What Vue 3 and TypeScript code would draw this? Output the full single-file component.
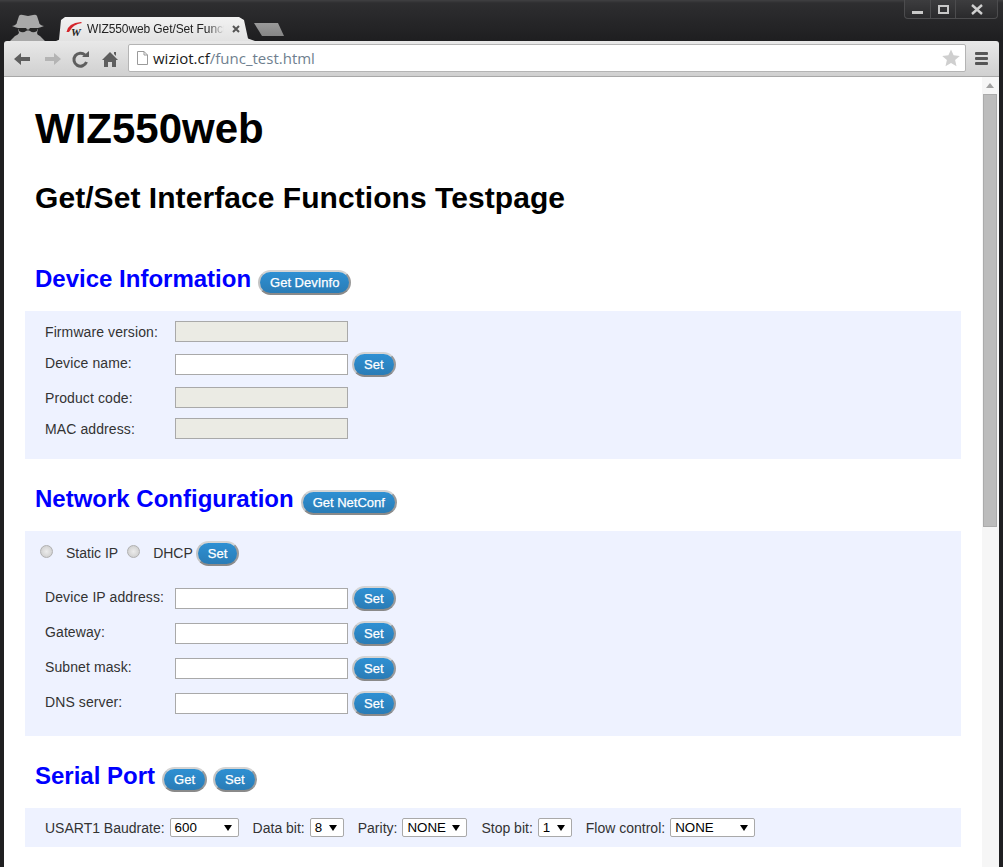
<script setup lang="ts">
const deviceRows = [
  { label: 'Firmware version:', disabled: true, set: false },
  { label: 'Device name:', disabled: false, set: true },
  { label: 'Product code:', disabled: true, set: false },
  { label: 'MAC address:', disabled: true, set: false },
];
const netRows = ['Device IP address:', 'Gateway:', 'Subnet mask:', 'DNS server:'];
</script>

<template>
  <div class="window">
    <div class="tabstrip">
      <svg class="spy" width="36" height="27" viewBox="0 0 36 27">
        <path d="M7 8 L9 2 Q10 0 13 1 L18 2 L23 1 Q26 0 27 2 L29 8 Q29 11 34 12 Q28 15 18 15 Q8 15 2 12 Q7 11 7 8 Z" fill="#a9a9a9" />
        <path d="M8 15 H28 L27 19 Q27 21 30 22 L35 27 H0 L5 22 Q8 21 9 19 Z" fill="#a9a9a9" />
        <path d="M8 14 H16 L17 15.5 H19 L20 14 H28 L27 17 Q23 19.5 20 17 L19 16.5 H17 L16 17 Q13 19.5 9 17 Z" fill="#262626" />
      </svg>
      <div class="tab">
        <svg class="favicon" width="18" height="16" viewBox="0 0 18 16">
          <path d="M0.5 11 Q2 2 15 1 L16 2 Q7 3 3 11 Z" fill="#d4252b" />
          <text x="5" y="15" class="fav-w">W</text>
        </svg>
        <span class="tab-title">WIZ550web Get/Set Funct</span>
        <svg class="tab-close" width="8" height="8" viewBox="0 0 8 8"><path d="M1 1 L7 7 M7 1 L1 7" stroke="#555" stroke-width="2" /></svg>
      </div>
      <div class="newtab"></div>
      <div class="controls">
        <span class="ctl ctl-min"><i></i></span>
        <span class="ctl ctl-max"><i></i></span>
        <span class="ctl ctl-close">
          <svg width="14" height="11" viewBox="0 0 14 11"><path d="M2 1 L12 10 M12 1 L2 10" stroke="#cfcfcf" stroke-width="2.4" /></svg>
        </span>
      </div>
    </div>

    <div class="toolbar">
      <svg class="tool" width="22" height="20" viewBox="0 0 22 20"><path d="M2 10 L9 4 V8 H18 V12 H9 V16 Z" fill="#5e5e5e" /></svg>
      <svg class="tool" width="22" height="20" viewBox="0 0 22 20"><path d="M20 10 L13 4 V8 H4 V12 H13 V16 Z" fill="#b4b4b4" /></svg>
      <svg class="tool" width="22" height="20" viewBox="0 0 22 20"><path d="M16.5 13 A6.5 6.5 0 1 1 15 6" fill="none" stroke="#5e5e5e" stroke-width="3" /><path d="M12 8 H19 V2 Z" fill="#5e5e5e" /></svg>
      <svg class="tool" width="22" height="20" viewBox="0 0 22 20"><path d="M11 3 L19 11 H17 V18 H13 V13 H9 V18 H5 V11 H3 Z M15 3 h2 v4 l-2-2z" fill="#5e5e5e" /></svg>
      <div class="omnibox">
        <svg class="page-icon" width="14" height="16" viewBox="0 0 14 16"><path d="M2.5 1.5 H9 L12.5 5 V14.5 H2.5 Z" fill="#fff" stroke="#9a9a9a" /><path d="M9 1.5 V5 H12.5" fill="none" stroke="#9a9a9a" /></svg>
        <span class="url"><b>wiziot.cf</b>/func_test.html</span>
        <svg class="star" width="20" height="20" viewBox="0 0 20 20"><path d="M10 1.5 L12.6 7.3 L18.8 7.9 L14.1 12 L15.5 18.2 L10 15 L4.5 18.2 L5.9 12 L1.2 7.9 L7.4 7.3 Z" fill="#cfcfcf" /></svg>
      </div>
      <div class="menu"><i></i><i></i><i></i></div>
    </div>

    <div class="viewport">
      <div class="page">
        <h1>WIZ550web</h1>
        <h2>Get/Set Interface Functions Testpage</h2>

        <div class="section-head first">
          <h3>Device Information</h3>
          <button class="btn">Get DevInfo</button>
        </div>
        <div class="panel panel-device">
          <div v-for="row in deviceRows" :key="row.label" class="row" :class="{ tall: row.set }">
            <label>{{ row.label }}</label>
            <input type="text" :disabled="row.disabled" />
            <button v-if="row.set" class="btn">Set</button>
          </div>
        </div>

        <div class="section-head">
          <h3>Network Configuration</h3>
          <button class="btn">Get NetConf</button>
        </div>
        <div class="panel panel-net">
          <div class="radios">
            <span class="radio"></span><span class="radio-text">Static IP</span>
            <span class="radio"></span><span class="radio-text">DHCP</span>
            <button class="btn">Set</button>
          </div>
          <div v-for="label in netRows" :key="label" class="row tall">
            <label>{{ label }}</label>
            <input type="text" />
            <button class="btn">Set</button>
          </div>
        </div>

        <div class="section-head">
          <h3>Serial Port</h3>
          <button class="btn">Get</button>
          <button class="btn">Set</button>
        </div>
        <div class="panel panel-serial">
          <span>USART1 Baudrate:</span>
          <span class="select w69">600</span>
          <span class="gap">Data bit:</span>
          <span class="select w34">8</span>
          <span class="gap">Parity:</span>
          <span class="select w65">NONE</span>
          <span class="gap">Stop bit:</span>
          <span class="select w34">1</span>
          <span class="gap">Flow control:</span>
          <span class="select w85">NONE</span>
        </div>
      </div>

      <div class="scrollbar">
        <span class="arrow"></span>
        <div class="thumb"></div>
      </div>
    </div>
  </div>
</template>

<style scoped>
.window {
  width: 1003px;
  height: 867px;
  overflow: hidden;
  display: flex;
  flex-direction: column;
  background: #1f1f21;
  font-family: "Liberation Sans", Arial, sans-serif;
}
.tabstrip {
  height: 41px;
  flex: none;
  position: relative;
  display: flex;
  align-items: flex-end;
  padding-left: 10px;
  background: linear-gradient(#404042 0, #2e2e30 3px, #1e1e20 100%);
}
.spy {
  flex: none;
}
.tab {
  width: 199px;
  height: 24px;
  flex: none;
  margin-left: 10px;
  display: flex;
  align-items: center;
  gap: 3px;
  padding: 0 14px 0 10px;
  box-sizing: border-box;
  background: linear-gradient(#f2f2f2, #e2e2e2);
  clip-path: polygon(0 100%, 3px 95%, 5px 12%, 9px 0, calc(100% - 16px) 0, calc(100% - 11px) 12%, calc(100% - 7px) 90%, 100% 100%);
  font-size: 12px;
  color: #222;
}
.favicon {
  flex: none;
}
.fav-w {
  font-family: "Liberation Serif", serif;
  font-weight: bold;
  font-style: italic;
  font-size: 11px;
  fill: #222;
}
.tab-title {
  width: 137px;
  flex: none;
  white-space: nowrap;
  letter-spacing: -0.1px;
  -webkit-mask-image: linear-gradient(90deg, #000 88%, transparent 100%);
  mask-image: linear-gradient(90deg, #000 88%, transparent 100%);
}
.tab-close {
  flex: none;
  margin-left: 5px;
}
.newtab {
  width: 30px;
  height: 13px;
  flex: none;
  margin: 0 0 5px -1px;
  background: linear-gradient(#9a9a9a, #858585);
  clip-path: polygon(0 0, 24px 0, 100% 100%, 8px 100%);
}
.controls {
  position: absolute;
  top: 0;
  right: 5px;
  display: flex;
  height: 18px;
  border: 1px solid #4c4c4e;
  border-top: 0;
  border-radius: 0 0 4px 4px;
  background: linear-gradient(#3d3d3f, #2a2a2c);
}
.ctl {
  display: flex;
  align-items: center;
  justify-content: center;
  height: 100%;
  width: 25px;
  box-sizing: border-box;
  border-left: 1px solid #4c4c4e;
}
.ctl:first-child {
  border-left: 0;
}
.ctl-close {
  width: 42px;
}
.ctl-min i {
  width: 11px;
  height: 3px;
  margin-top: 6px;
  background: #c8c8c8;
}
.ctl-max i {
  width: 11px;
  height: 9px;
  box-sizing: border-box;
  border: 2px solid #c8c8c8;
}
.toolbar {
  flex: none;
  height: 36px;
  margin: 0 4px;
  display: flex;
  align-items: center;
  gap: 7px;
  padding: 0 11px 0 8px;
  background: linear-gradient(#e8e8e8, #d0d0d0);
  border-bottom: 1px solid #a8a8a8;
  border-radius: 3px 3px 0 0;
  box-sizing: border-box;
}
.tool {
  flex: none;
}
.omnibox {
  flex: 1;
  height: 26px;
  margin-top: -1px;
  display: flex;
  align-items: center;
  gap: 4px;
  padding: 0 4px 0 6px;
  background: #fff;
  border: 1px solid #b4b4b4;
  border-radius: 2px;
}
.page-icon {
  flex: none;
}
.url {
  flex: 1;
  font-family: "Open Sans", sans-serif;
  font-size: 15px;
  color: #6f7f8f;
}
.url b {
  font-weight: normal;
  color: #1a1a1a;
}
.menu {
  width: 13px;
  flex: none;
  margin-left: 2px;
  display: flex;
  flex-direction: column;
  gap: 2px;
}
.menu i {
  height: 3px;
  background: #555;
  border-radius: 1px;
}
.viewport {
  flex: 1;
  min-height: 0;
  margin: 0 4px;
  display: flex;
  background: #fff;
}
.page {
  flex: 1;
  min-width: 0;
  padding: 0 21px;
  color: #333;
  font-size: 14px;
}
h1,
h2,
h3 {
  margin: 0;
  font-weight: bold;
}
h1 {
  padding: 28px 10px 0;
  font-size: 42px;
  line-height: 48px;
  color: #000;
}
h2 {
  padding: 28px 10px 0;
  font-size: 30px;
  line-height: 34px;
  letter-spacing: 0.06px;
  color: #000;
}
h3 {
  font-size: 24px;
  line-height: 28px;
  color: #00f;
}
.section-head {
  height: 72px;
  box-sizing: border-box;
  padding: 8px 10px 0;
  display: flex;
  align-items: center;
  gap: 7px;
}
.section-head.first {
  margin-top: 24px;
}
.btn {
  height: 25px;
  padding: 0 10px;
  font: 13px "Liberation Sans", Arial, sans-serif;
  -webkit-text-stroke: 0.25px #fff;
  color: #fff;
  background: linear-gradient(#2e90d3, #2a7cb6);
  border: 2px solid;
  border-color: #d4d4d4 #9a9a9a #8a8a8a #c4c4c4;
  border-radius: 13px;
  margin-top: 7px;
}
.btn + .btn {
  margin-left: -1px;
}
.panel {
  background: #eef2ff;
}
.panel-device {
  height: 148px;
  padding: 5px 20px 0;
  box-sizing: border-box;
}
.row {
  display: flex;
  align-items: center;
  height: 31px;
}
.row.tall {
  height: 35px;
}
.row label {
  width: 130px;
  flex: none;
  letter-spacing: 0.1px;
}
.row.tall label {
  margin-top: -4px;
}
.row input {
  width: 173px;
  height: 21px;
  box-sizing: border-box;
  border: 1px solid #a9a9a9;
  background: #fff;
  padding: 0;
  flex: none;
}
.row input:disabled {
  background: #ebebe4;
}
.row .btn {
  margin: 0 0 0 4px;
}
.panel-net {
  height: 205px;
  padding: 10px 20px 0;
  box-sizing: border-box;
}
.radios {
  display: flex;
  align-items: center;
  height: 25px;
  margin-left: -5px;
  margin-bottom: 15px;
}
.radio {
  width: 13px;
  height: 13px;
  box-sizing: border-box;
  border: 1px solid #b0b0b0;
  border-radius: 50%;
  background: radial-gradient(#ececec, #c8c8c8);
  margin-top: -4px;
}
.radio-text {
  margin: -2px 9px 0 13px;
}
.radios .btn {
  margin: 0 0 0 -6px;
}
.panel-serial {
  height: 39px;
  padding: 0 20px;
  display: flex;
  align-items: center;
}
.gap {
  margin-left: 14px;
}
.select {
  position: relative;
  height: 19px;
  box-sizing: border-box;
  margin-left: 5px;
  padding-left: 4px;
  border: 1px solid #a9a9a9;
  border-radius: 2px;
  background: #fff;
  color: #000;
  font-size: 13.33px;
  line-height: 17px;
}
.select::after {
  content: '';
  position: absolute;
  right: 6px;
  top: 6px;
  border: 4px solid transparent;
  border-top: 6px solid #000;
  border-bottom: 0;
}
.w69 { width: 69px; }
.w34 { width: 34px; }
.w65 { width: 65px; }
.w85 { width: 85px; }
.scrollbar {
  width: 17px;
  flex: none;
  position: relative;
  background: #f6f6f6;
}
.arrow {
  position: absolute;
  top: 6px;
  left: 4px;
  border: 4px solid transparent;
  border-bottom: 5px solid #a0a0a0;
  border-top: 0;
}
.thumb {
  margin: 17px 2px 0 1px;
  height: 433px;
  box-sizing: border-box;
  border: 1px solid #ababab;
  background: #bcbcbc;
}
</style>
